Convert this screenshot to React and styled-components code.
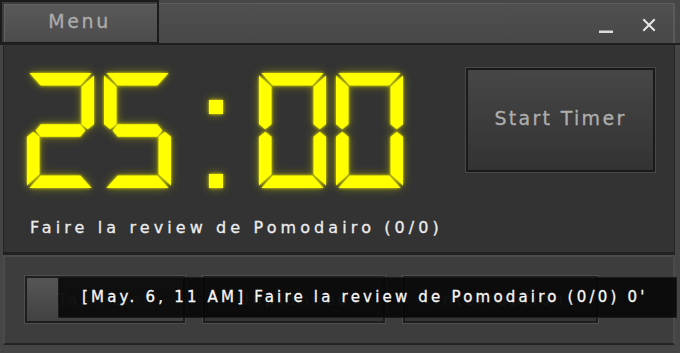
import React from "react";
import styled, { createGlobalStyle } from "styled-components";

const GlobalStyle = createGlobalStyle`
  html, body { margin: 0; padding: 0; background: #454545; }
  * { box-sizing: border-box; }
`;

const Window = styled.div`
  position: relative;
  width: 680px;
  height: 353px;
  display: flex;
  flex-direction: column;
  background: #454545;
  font-family: "DejaVu Sans", "Verdana", sans-serif;
  overflow: hidden;
`;

const TitleBar = styled.div`
  height: 45px;
  display: flex;
  align-items: stretch;
  border-bottom: 2px solid #1f1f1f;
  background: #474747;
`;

const MenuButton = styled.div`
  width: 159px;
  border: 2px solid #1b1b1b;
  border-bottom-width: 1px;
  background: linear-gradient(#5a5a5a, #4c4c4c);
  box-shadow: inset 2px 2px 0 #3c3c3c, inset 3px 3px 0 #626262;
  color: #ababab;
  font-size: 19px;
  letter-spacing: 2.6px;
  -webkit-text-stroke: 0.3px #ababab;
  display: flex;
  align-items: center;
  justify-content: center;
  padding-bottom: 2px;
`;

const Caption = styled.div`
  flex: 1;
  margin-top: 3px;
  margin-right: 5px;
  background: linear-gradient(#4f4f4f, #484848);
  border-top: 1px solid #5e5e5e;
  border-right: 2px solid #5a5a5a;
  display: flex;
  align-items: center;
  justify-content: flex-end;
  gap: 21px;
  padding-right: 13px;
`;

const ControlButton = styled.div`
  width: 22px;
  height: 22px;
  display: flex;
  align-items: center;
  justify-content: center;
  margin-top: 2px;
`;

const Main = styled.div`
  height: 210px;
  margin-left: 3px;
  margin-right: 5px;
  background: #333333;
  border-left: 1px solid #262626;
  border-right: 1px solid #262626;
  border-bottom: 3px solid #222222;
  display: flex;
`;

const TimerColumn = styled.div`
  flex: 1;
  padding: 28px 0 0 23px;
  display: flex;
  flex-direction: column;
`;

const Display = styled.div`
  position: relative;
  display: flex;
  gap: 10px;
  height: 115px;
  width: 378px;
  filter: drop-shadow(0 0 1.5px rgba(255, 255, 0, 0.85))
    drop-shadow(0 0 4px rgba(170, 170, 0, 0.65));
`;

const TimeText = styled.span`
  position: absolute;
  inset: 0;
  color: transparent;
  font-family: "DejaVu Sans Mono", monospace;
  font-size: 100px;
  line-height: 115px;
  letter-spacing: 15px;
  white-space: nowrap;
  user-select: text;
`;

const DigitBox = styled.div`
  position: relative;
  width: 67px;
  height: 115px;
`;

const Segment = styled.div`
  position: absolute;
  inset: 0;
  background: #ffff00;
  clip-path: polygon(${(p) => p.$points});
`;

const Colon = styled.div`
  width: 15px;
  margin: 0 26px 0 27px;
  padding-top: 27px;
  display: flex;
  flex-direction: column;
  align-items: center;
  gap: 60px;
`;

const Dot = styled.div`
  width: 14px;
  height: 14px;
  background: #ffff00;
`;

const TaskLabel = styled.div`
  margin: 30px 0 0 3px;
  color: #ececec;
  font-size: 16px;
  line-height: 20px;
  letter-spacing: 4.1px;
  -webkit-text-stroke: 0.3px #ececec;
  white-space: nowrap;
`;

const StartButton = styled.div`
  width: 189px;
  height: 104px;
  margin: 23px 19px 0 0;
  border: 2px solid #1a1a1a;
  box-shadow: 0 0 0 1px #484848;
  background: linear-gradient(#464646, #333333);
  color: #adadad;
  font-size: 19px;
  letter-spacing: 2.3px;
  -webkit-text-stroke: 0.3px #adadad;
  display: flex;
  align-items: center;
  justify-content: center;
  padding-bottom: 4px;
`;

const BottomPanel = styled.div`
  height: 90px;
  margin-left: 3px;
  margin-right: 5px;
  background: #3d3d3d;
  border: 2px solid #4b4b4b;
  border-bottom-color: #232323;
  padding: 19px 0 0 20px;
  display: flex;
  gap: 18px;
  align-items: flex-start;
`;

const Tab = styled.div`
  width: ${(p) => p.$width}px;
  height: 47px;
  border: 2px solid #1e1e1e;
  box-shadow: 0 0 0 1px #4e4e4e;
  background: ${(p) =>
    p.$active ? "linear-gradient(#555555, #424242)" : "linear-gradient(#3c3c3c, #353535)"};
  color: #7a7a7a;
  font-size: 16px;
  letter-spacing: 3px;
  display: flex;
  align-items: center;
  justify-content: center;
  white-space: nowrap;
`;

const Tooltip = styled.div`
  position: absolute;
  left: 58px;
  top: 277px;
  width: 619px;
  height: 41px;
  background: rgba(6, 6, 6, 0.88);
  border: 1px solid rgba(30, 30, 30, 0.9);
  color: #f6f6f6;
  font-size: 15px;
  letter-spacing: 3.2px;
  -webkit-text-stroke: 0.3px #f6f6f6;
  line-height: 39px;
  padding-left: 23px;
  white-space: nowrap;
`;

const W = 67;
const H = 115;
const T = 12.5;
const h = T / 2;
const m = H / 2;
const s = 1.2;

const P = (pts) => pts.map(([x, y]) => `${x}px ${y}px`).join(", ");

const SEGMENTS = {
  a: P([[2 * s, 0], [W - 2 * s, 0], [W - T - s, T], [T + s, T]]),
  d: P([[2 * s, H], [W - 2 * s, H], [W - T - s, H - T], [T + s, H - T]]),
  f: P([[0, 2 * s], [T, T + s], [T, m - h], [h, m - s], [0, m - h]]),
  e: P([[0, H - 2 * s], [T, H - T - s], [T, m + h], [h, m + s], [0, m + h]]),
  b: P([[W, 2 * s], [W - T, T + s], [W - T, m - h], [W - h, m - s], [W, m - h]]),
  c: P([[W, H - 2 * s], [W - T, H - T - s], [W - T, m + h], [W - h, m + s], [W, m + h]]),
  g: P([
    [h + 2 * s, m],
    [T + s, m - h],
    [W - T - s, m - h],
    [W - h - 2 * s, m],
    [W - T - s, m + h],
    [T + s, m + h],
  ]),
};

const DIGIT_MAP = {
  0: "abcdef",
  1: "bc",
  2: "abged",
  3: "abgcd",
  4: "fgbc",
  5: "afgcd",
  6: "afgedc",
  7: "abc",
  8: "abcdefg",
  9: "abcdfg",
};

function Digit({ value }) {
  return (
    <DigitBox aria-hidden="true">
      {DIGIT_MAP[value].split("").map((k) => (
        <Segment key={k} $points={SEGMENTS[k]} />
      ))}
    </DigitBox>
  );
}

function MinimizeIcon() {
  return (
    <svg width="16" height="20" viewBox="0 0 16 20">
      <rect x="1" y="15.5" width="14" height="2.5" fill="#dcdcdc" />
    </svg>
  );
}

function CloseIcon() {
  return (
    <svg width="14" height="14" viewBox="0 0 14 14">
      <path d="M2 2 L12 12 M12 2 L2 12" stroke="#e6e6e6" strokeWidth="2" strokeLinecap="square" />
    </svg>
  );
}

export default function App() {
  const time = "25:00";
  const [mm, ss] = time.split(":");
  return (
    <>
      <GlobalStyle />
      <Window>
        <TitleBar>
          <MenuButton>Menu</MenuButton>
          <Caption>
            <ControlButton>
              <MinimizeIcon />
            </ControlButton>
            <ControlButton>
              <CloseIcon />
            </ControlButton>
          </Caption>
        </TitleBar>
        <Main>
          <TimerColumn>
            <Display>
              <Digit value={mm[0]} />
              <Digit value={mm[1]} />
              <Colon aria-hidden="true">
                <Dot />
                <Dot />
              </Colon>
              <Digit value={ss[0]} />
              <Digit value={ss[1]} />
              <TimeText>{time}</TimeText>
            </Display>
            <TaskLabel>Faire la review de Pomodairo (0/0)</TaskLabel>
          </TimerColumn>
          <StartButton>Start Timer</StartButton>
        </Main>
        <BottomPanel>
          <Tab $width={160} $active>Task List</Tab>
          <Tab $width={182}>Unplanned</Tab>
          <Tab $width={195}>Interruption</Tab>
        </BottomPanel>
        <Tooltip>[May. 6, 11 AM] Faire la review de Pomodairo (0/0) 0'</Tooltip>
      </Window>
    </>
  );
}
